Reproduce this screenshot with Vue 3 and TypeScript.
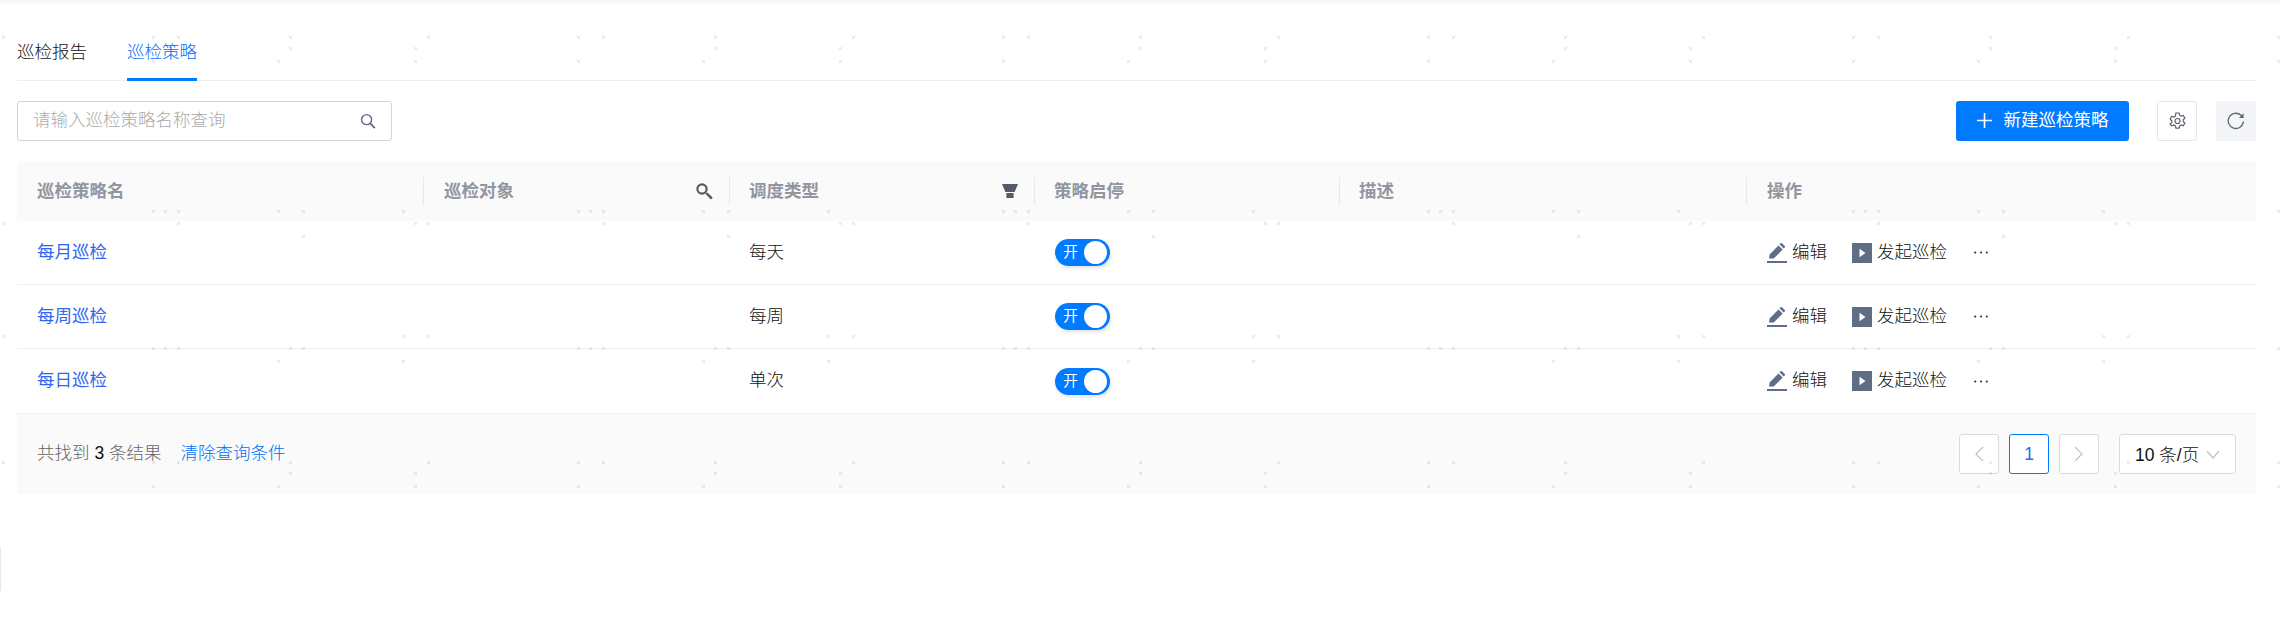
<template>
  <div class="page">
    <div class="top-fade"></div>
    <div class="content">
      <div class="tabs">
        <span class="tab">巡检报告</span>
        <span class="tab active">巡检策略</span>
      </div>

      <div class="toolbar">
        <div class="search">
          <span class="placeholder">请输入巡检策略名称查询</span>
          <svg class="search-icon" width="16" height="16" viewBox="0 0 16 16" fill="none" stroke="#5f6b7c" stroke-width="1.4">
            <circle cx="6.6" cy="6.6" r="5" />
            <path d="M10.2 10.4l4.6 4.8" stroke-width="1.8" />
          </svg>
        </div>
        <div class="tools">
          <button class="create">
            <svg class="plus" width="15" height="15" viewBox="0 0 15 15" stroke="#fff" stroke-width="1.6"><path d="M7.5 0v15M0 7.5h15" /></svg>
            <span class="btn-text">新建巡检策略</span>
          </button>
          <span class="square">
            <svg width="17" height="18" viewBox="0 0 16 18" fill="none" stroke="#5c6470" stroke-width="1.2">
              <path d="M6.4 1h3.2l.5 2.2 1.5.9 2.2-.7 1.6 2.8-1.7 1.5v1.7l1.7 1.6-1.6 2.7-2.2-.7-1.5.9-.5 2.2H6.4l-.5-2.2-1.5-.9-2.2.7L.6 12l1.7-1.6V8.7L.6 7.2l1.6-2.8 2.2.7 1.5-.9z" />
              <circle cx="8" cy="9" r="2.5" />
            </svg>
          </span>
          <span class="square grey">
            <svg width="18" height="18" viewBox="0 0 18 18" fill="none" stroke="#5c6470" stroke-width="1.3">
              <path d="M16.4 9.5a7.6 7.6 0 1 1-2.4-6.2L15.8 5" />
              <path d="M16.6 1.2v4.8h-4.6z" fill="#5c6470" stroke="none" />
            </svg>
          </span>
        </div>
      </div>

      <div class="table">
        <div class="row head">
          <div v-for="col in columns" :key="col.title" class="cell">
            <span class="head-text">{{ col.title }}</span>
            <svg v-if="col.icon === 'key'" class="head-icon" width="17" height="17" viewBox="0 0 17 17">
              <circle cx="6" cy="6" r="4.6" fill="none" stroke="#555b66" stroke-width="2.2" />
              <path d="M9.4 10.8l1.6-1.6 5 4.6c.6.6.6 1.3 0 1.9s-1.3.6-1.9 0z" fill="#555b66" />
            </svg>
            <svg v-if="col.icon === 'funnel'" class="head-icon" width="16" height="14" viewBox="0 0 16 14" fill="#555b66">
              <path d="M0 0h16l-3.4 8H3.4z" />
              <path d="M4.4 9h7.2v5H4.4z" />
            </svg>
          </div>
        </div>

        <div v-for="item in rows" :key="item.name" class="row body">
          <div class="cell"><a class="link lift">{{ item.name }}</a></div>
          <div class="cell"></div>
          <div class="cell"><span class="lift">{{ item.type }}</span></div>
          <div class="cell">
            <span class="switch"><span class="switch-text">开</span><span class="knob"></span></span>
          </div>
          <div class="cell"></div>
          <div class="cell ops">
            <span class="op">
              <svg width="20" height="20" viewBox="0 0 20 20" fill="#5d6e85">
                <path d="M2 15.5l.6-4L11.5 2.4l4.2 4.2-9 9z" />
                <path d="M12.6 1.3l1-1c.4-.4 1-.4 1.4 0l2.7 2.7c.4.4.4 1 0 1.4l-1 1z" />
                <path d="M0 18h20v2H0z" />
              </svg>
              <span class="lift">编辑</span>
            </span>
            <span class="op">
              <svg width="20" height="20" viewBox="0 0 20 20">
                <path d="M0 0h20v20H0z" fill="#5d6e85" />
                <path d="M7.5 5.8l6 4.2-6 4.2z" fill="#fff" />
              </svg>
              <span class="lift">发起巡检</span>
            </span>
            <svg class="more" width="14" height="3" viewBox="0 0 14 3" fill="#333">
              <circle cx="1.2" cy="1.5" r="1.1" /><circle cx="7" cy="1.5" r="1.1" /><circle cx="12.8" cy="1.5" r="1.1" />
            </svg>
          </div>
        </div>

        <div class="footer">
          <div class="summary">
            <span class="found">共找到 <b>3</b> 条结果</span>
            <a class="clear">清除查询条件</a>
          </div>
          <div class="pager">
            <span class="page-btn">
              <svg width="10" height="16" viewBox="0 0 10 16" fill="none" stroke="#c4c4c4" stroke-width="1.3"><path d="M9 1L2 8l7 7" /></svg>
            </span>
            <span class="page-btn current">1</span>
            <span class="page-btn">
              <svg width="10" height="16" viewBox="0 0 10 16" fill="none" stroke="#c4c4c4" stroke-width="1.3"><path d="M1 1l7 7-7 7" /></svg>
            </span>
            <span class="size">
              <span class="size-text">10 条/页</span>
              <svg width="14" height="9" viewBox="0 0 14 9" fill="none" stroke="#c4c4c4" stroke-width="1.3"><path d="M1 1l6 7 6-7" /></svg>
            </span>
          </div>
        </div>
      </div>
    </div>

    <!-- watermark dots, repeats every 425px -->
    <svg class="watermark" width="2280" height="635">
      <defs>
        <pattern id="wm" x="0" y="36" width="425" height="425" patternUnits="userSpaceOnUse">
          <rect v-for="d in dots" :key="d.join()" :x="d[0]" :y="d[1]" width="3" height="3" fill="#000" fill-opacity="0.075" />
        </pattern>
      </defs>
      <rect width="2280" height="635" fill="url(#wm)" />
    </svg>
    <div class="edge"></div>
  </div>
</template>

<script setup lang="ts">
const columns = [
  { title: '巡检策略名' },
  { title: '巡检对象', icon: 'key' },
  { title: '调度类型', icon: 'funnel' },
  { title: '策略启停' },
  { title: '描述' },
  { title: '操作' },
]

const rows = [
  { name: '每月巡检', type: '每天' },
  { name: '每周巡检', type: '每周' },
  { name: '每日巡检', type: '单次' },
]

// x, y inside one tile, top left of each dot
const dots: number[][] = [
  [2, 0], [152, 0], [177, 0], [289, 0],
  [289, 11], [414, 11],
  [277, 24], [414, 24], [152, 24],
  [152, 174], [164, 174], [177, 174], [277, 174], [302, 174], [402, 174],
  [2, 186], [177, 186], [414, 186],
  [302, 199],
  [2, 299], [402, 299],
  [152, 311], [164, 311], [177, 311], [289, 311], [302, 311],
  [277, 324], [402, 324],
]
</script>

<style>
html,
body {
  margin: 0;
  background: #fff;
}
</style>

<style scoped>
.page {
  position: relative;
  width: 2280px;
  height: 635px;
  overflow: hidden;
  font-family: "Liberation Sans", "Noto Sans CJK SC", sans-serif;
  font-size: 17.5px;
  font-weight: 300;
  color: #111;
}

.top-fade {
  height: 6px;
  background: linear-gradient(#f3f4f7, #fff);
}

.content {
  padding: 0 24px 0 17px;
}

.tabs {
  display: flex;
  gap: 40px;
  height: 74px;
  border-bottom: 1px solid #eee;
}

.tab {
  box-sizing: border-box;
  height: 75px;
  padding-top: 27px;
  line-height: 38px;
  color: #111;
}

.tab.active {
  color: #0070f5;
  border-bottom: 3px solid #007aff;
}

.toolbar {
  display: flex;
  justify-content: space-between;
  margin-top: 20px;
}

.search {
  box-sizing: border-box;
  display: flex;
  align-items: center;
  justify-content: space-between;
  width: 375px;
  height: 40px;
  padding: 0 15px;
  border: 1px solid #d4d4d4;
  border-radius: 3px;
}

.placeholder {
  padding-bottom: 6px;
  color: #aaa;
}

.tools {
  display: flex;
  align-items: center;
}

.create {
  display: flex;
  align-items: center;
  justify-content: center;
  gap: 12px;
  width: 173px;
  height: 40px;
  padding: 0;
  border: 0;
  border-radius: 3px;
  background: #007aff;
  color: #fff;
  font: inherit;
}

.plus {
  margin-bottom: 2px;
}

.btn-text {
  padding-bottom: 6px;
  font-weight: 400;
}

.square {
  box-sizing: border-box;
  display: flex;
  align-items: center;
  justify-content: center;
  width: 40px;
  height: 40px;
  margin-left: 28px;
  border: 1px solid #e6e6e6;
  border-radius: 3px;
}

.square.grey {
  margin-left: 19px;
  border: 0;
  border-radius: 0;
  background: #f3f5f9;
}

.table {
  margin-top: 20px;
}

.row {
  display: grid;
  grid-template-columns: 406px 306px 305px 305px 407px 1fr;
}

.head {
  height: 60px;
  background: #fafafa;
  color: #92969e;
}

.head-text {
  padding-bottom: 3px;
  font-weight: 600;
}

.head .cell {
  position: relative;
  display: flex;
  align-items: center;
  justify-content: space-between;
  padding: 0 16px 0 20px;
}

.head .cell:nth-child(2),
.head .cell:nth-child(6) {
  padding-left: 21px;
}

.head .cell + .cell::before {
  content: "";
  position: absolute;
  left: 0;
  top: 16px;
  bottom: 16px;
  width: 1px;
  background: #e8e8e8;
}

.head-icon {
  flex: none;
}

.body {
  box-sizing: border-box;
  height: 64px;
  border-bottom: 1px solid #eee;
}

.body:nth-child(4) {
  height: 65px;
}

.body .cell {
  display: flex;
  align-items: center;
  padding: 0 20px;
}

.body .cell:nth-child(4),
.body .cell:nth-child(6) {
  padding-left: 21px;
}

.lift {
  padding-bottom: 5px;
}

.link {
  color: #2f66f0;
  font-weight: 400;
}

.switch {
  position: relative;
  box-sizing: border-box;
  display: block;
  width: 55px;
  height: 27px;
  border-radius: 14px;
  background: #007aff;
  box-shadow: 1px 2px 4px rgba(0, 0, 0, 0.12);
}

.switch-text {
  display: block;
  padding-left: 8px;
  color: #fff;
  font-size: 15px;
  font-weight: 400;
  line-height: 26px;
}

.knob {
  position: absolute;
  top: 2px;
  right: 3px;
  width: 23px;
  height: 23px;
  border-radius: 50%;
  background: #fff;
}

.op {
  display: flex;
  align-items: center;
  gap: 5px;
  margin-right: 25px;
}

.more {
  margin-left: 2px;
}

.footer {
  display: flex;
  align-items: center;
  justify-content: space-between;
  height: 80px;
  padding: 0 20px;
  background: #fafafa;
}

.summary {
  display: flex;
  gap: 19px;
  padding-bottom: 5px;
}

.found {
  color: #666;
}

.found b {
  font-weight: 300;
  color: #111;
}

.clear {
  color: #0070f5;
}

.pager {
  display: flex;
  gap: 10px;
}

.page-btn {
  box-sizing: border-box;
  display: flex;
  align-items: center;
  justify-content: center;
  width: 40px;
  height: 40px;
  border: 1px solid #dadada;
  border-radius: 3px;
  background: #fff;
}

.page-btn.current {
  border-color: #007aff;
  color: #1f6fe8;
}

.size {
  box-sizing: border-box;
  display: flex;
  align-items: center;
  justify-content: space-between;
  width: 117px;
  height: 40px;
  margin-left: 10px;
  padding: 0 15px;
  border: 1px solid #dadada;
  border-radius: 3px;
  background: #fff;
}

.size-text {
  padding-bottom: 2px;
}

.watermark {
  position: absolute;
  left: 0;
  top: 0;
  pointer-events: none;
}

.edge {
  position: absolute;
  left: 0;
  top: 547px;
  width: 1px;
  height: 44px;
  background: #e6e6f0;
}
</style>
